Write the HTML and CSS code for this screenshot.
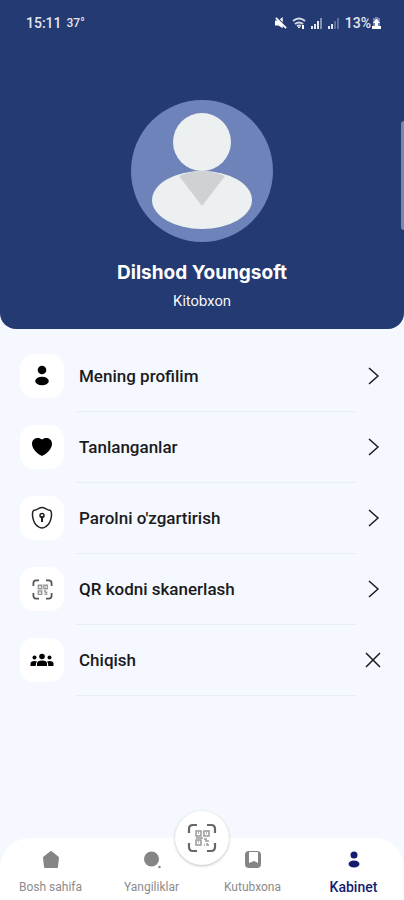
FILE: index.html
```html
<!DOCTYPE html>
<html lang="uz">
<head>
  <meta charset="UTF-8">
  <meta name="viewport" content="width=device-width, initial-scale=1.0">
  <title>Kabinet</title>
  <link rel="stylesheet" href="styles.css">
</head>
<body>
  <header class="profile">
    <div class="status-bar">
      <div class="status-left">
        <span>15:11</span>
        <span class="temp">37°</span>
      </div>
      <div class="status-right">
        <svg width="12" height="12" viewBox="0 0 14 14">
          <path d="M0 4h4l5-4v13L4 10H0z" fill="#fff"/>
          <path d="M2 0l12 13" stroke="#233a73" stroke-width="2"/>
          <path d="M1 1l12 12" stroke="#fff" stroke-width="2"/>
        </svg>
        <svg width="14" height="14" viewBox="0 0 14 14" fill="none" stroke="#d3d8e5" stroke-width="2">
          <path d="M1 5q6-5 12 0M3 8q4-3 8 0M5 10q2-1 4 0"/>
          <path d="M7 11v1M11 9v4" stroke="#fff"/>
        </svg>
        <svg width="12" height="12" viewBox="0 0 12 12">
          <path d="M0 9h2v3H0zM3 7h2v5H3zM6 4h2v8H6z" fill="#e3e6ee"/>
          <path d="M9 1h2v11H9z" fill="#8290b2"/>
        </svg>
        <svg width="12" height="12" viewBox="0 0 12 12">
          <path d="M0 9h2v3H0zM3 7h2v5H3z" fill="#e3e6ee"/>
          <path d="M6 4h2v8H6zM9 1h2v11H9z" fill="#5f70a0"/>
        </svg>
        <span class="battery">13%
          <svg width="9" height="12" viewBox="0 0 9 12">
            <path d="M3 0h3v1h2v11H1V1h2z" fill="#7282aa"/>
            <path d="M0 9h9v3H0zM4 2h1l3 4H6v3H3V6H1z" fill="#fff"/>
          </svg>
        </span>
      </div>
    </div>

    <svg class="avatar" viewBox="0 0 142 142" role="img" aria-label="Avatar">
      <circle cx="71" cy="71" r="71" fill="#6e83b9"/>
      <ellipse cx="71" cy="100" rx="50" ry="29" fill="#edf0f1"/>
      <path d="M48 76q23-10 46 0L71 106z" fill="#d0d1d2"/>
      <circle cx="71" cy="42" r="29" fill="#edf0f1"/>
    </svg>
    <h1>Dilshod Youngsoft</h1>
    <p class="role">Kitobxon</p>
    <div class="edge-handle"></div>
  </header>

  <main>
    <ul class="menu">
      <li>
        <a href="#profil">
          <span class="menu-icon">
            <svg width="24" height="24" viewBox="0 0 24 24">
              <circle cx="12" cy="6" r="4.300"/>
              <ellipse cx="12" cy="17" rx="6.800" ry="4.300"/>
            </svg>
          </span>
          <span class="menu-label">Mening profilim</span>
          <svg class="arrow" width="18" height="18" viewBox="0 0 18 18"><path d="M5 1l9 8-9 8"/></svg>
        </a>
      </li>
      <li>
        <a href="#tanlanganlar">
          <span class="menu-icon">
            <svg width="24" height="24" viewBox="0 0 24 24">
              <path d="M12 21C9 19.500 2 15 2 8.700 2 3 8.500 1.300 12 4.500c3.500-3.200 10-1.500 10 4.200 0 6.300-7 10.800-10 12.300z"/>
            </svg>
          </span>
          <span class="menu-label">Tanlanganlar</span>
          <svg class="arrow" width="18" height="18" viewBox="0 0 18 18"><path d="M5 1l9 8-9 8"/></svg>
        </a>
      </li>
      <li>
        <a href="#parol">
          <span class="menu-icon">
            <svg width="24" height="24" viewBox="0 0 24 24" fill="none" stroke="#222" stroke-width="1.500">
              <path d="M12 1.500C9 1.500 8 4 3.500 4.500 1.500 7 2.500 17 8 20.500c2.500 2 5.500 2 8 0 5.500-3.500 6.500-13.500 4.500-16C16 4 15 1.500 12 1.500z"/>
              <circle cx="12" cy="9.500" r="2"/>
              <path d="M12 10v6" stroke-width="2"/>
            </svg>
          </span>
          <span class="menu-label">Parolni o'zgartirish</span>
          <svg class="arrow" width="18" height="18" viewBox="0 0 18 18"><path d="M5 1l9 8-9 8"/></svg>
        </a>
      </li>
      <li>
        <a href="#qr">
          <span class="menu-icon">
            <svg width="21" height="21" viewBox="0 0 30 30" fill="none" stroke="#555">
              <path d="M2 10V6q0-4 4-4h4M20 2h4q4 0 4 4v4M28 20v4q0 4-4 4h-4M10 28H6q-4 0-4-4v-4" stroke-width="2.500"/>
              <path d="M9 9h5v5H9zM17 9h5v5h-5zM9 17h5v5H9zM17 17h2v2h3M22 22h-2v-2M17 22h1M11 11h1M19 11h1M11 19h1" stroke="#999" stroke-width="2"/>
            </svg>
          </span>
          <span class="menu-label">QR kodni skanerlash</span>
          <svg class="arrow" width="18" height="18" viewBox="0 0 18 18"><path d="M5 1l9 8-9 8"/></svg>
        </a>
      </li>
      <li>
        <a href="#chiqish">
          <span class="menu-icon">
            <svg width="24" height="24" viewBox="0 0 24 24">
              <circle cx="12" cy="8.500" r="2.800"/>
              <circle cx="4.500" cy="9.500" r="2"/>
              <circle cx="19.500" cy="9.500" r="2"/>
              <path d="M7 18v-2.500q0-3 5-3t5 3V18zM0.500 18v-2.500Q0.500 13 4.500 13q1.500 0 2.500.500-1.300 1-1.300 4.500zM23.500 18v-2.500Q23.500 13 19.500 13q-1.500 0-2.500.500 1.300 1 1.300 4.500z"/>
            </svg>
          </span>
          <span class="menu-label">Chiqish</span>
          <svg class="arrow" width="18" height="18" viewBox="0 0 18 18"><path d="M2 2l14 14M16 2L2 16"/></svg>
        </a>
      </li>
    </ul>
  </main>

  <nav class="bottom-nav">
    <a href="#bosh">
      <svg width="20" height="20" viewBox="0 0 20 20" fill="#858585">
        <path d="M10 2l7 5.500L16 17H4L3 7.500z" stroke="#858585" stroke-width="2" stroke-linejoin="round"/>
      </svg>
      Bosh sahifa
    </a>
    <a href="#yangiliklar">
      <svg width="20" height="20" viewBox="0 0 20 20" fill="#858585">
        <circle cx="9.500" cy="9" r="7.500"/>
        <circle cx="17.500" cy="17" r="1.200"/>
      </svg>
      Yangiliklar
    </a>
    <a href="#kutubxona">
      <svg width="20" height="20" viewBox="0 0 20 20">
        <rect x="2" y="1" width="16" height="17" rx="4" fill="#858585"/>
        <path d="M6 2h9v11l-4-2-5 2z" fill="#fff"/>
      </svg>
      Kutubxona
    </a>
    <a href="#kabinet" class="active">
      <svg width="20" height="20" viewBox="0 0 20 20" fill="#141c72">
        <circle cx="10" cy="5" r="3.500"/>
        <ellipse cx="10" cy="14" rx="5.500" ry="3.500"/>
      </svg>
      Kabinet
    </a>
    <button type="button" class="scan-btn" aria-label="QR skaner">
      <svg width="30" height="30" viewBox="0 0 30 30" fill="none" stroke="#666">
        <path d="M2 10V6q0-4 4-4h4M20 2h4q4 0 4 4v4M28 20v4q0 4-4 4h-4M10 28H6q-4 0-4-4v-4" stroke-width="2.200"/>
        <path d="M9 8h5v5H9zM17 8h5v5h-5zM9 17h5v5H9zM17 16h2v2h3M22 22h-2v-2M17 22h1M11 10h1M19 10h1M11 19h1M9 15h7" stroke="#999" stroke-width="1.500"/>
      </svg>
    </button>
  </nav>
</body>
</html>
```
FILE: styles.css
```css
* {
  box-sizing: border-box;
}

body {
  margin: 0;
  min-height: 100vh;
  display: flex;
  flex-direction: column;
  font-family: Roboto, Arial, sans-serif;
  background-color: #f5f8ff;
  color: #1b1b1d;
}

a {
  color: inherit;
  text-decoration: none;
}

.profile {
  position: relative;
  display: flex;
  flex-direction: column;
  align-items: center;
  padding-bottom: 18px;
  background-color: #233a73;
  border-radius: 0 0 16px 16px;
  color: #fff;
}

.status-bar {
  align-self: stretch;
  display: flex;
  justify-content: space-between;
  align-items: center;
  height: 46px;
  padding: 0 23px 0 26px;
  font-size: 14px;
  font-weight: 500;
  color: #e3e6ee;
}

.status-left,
.status-right,
.battery {
  display: flex;
  align-items: center;
}

.status-left {
  gap: 5px;
}

.temp {
  font-size: 12px;
}

.status-right {
  gap: 5px;
}

.battery {
  gap: 1px;
}

.avatar {
  width: 142px;
  height: 142px;
  margin-top: 54px;
}

.profile h1 {
  margin: 18px 0 0;
  font-family: Inter, Arial, sans-serif;
  font-size: 19px;
  line-height: 26px;
  font-weight: 700;
}

.role {
  margin: 5px 0 0;
  font-family: Inter, Arial, sans-serif;
  font-size: 14px;
  line-height: 20px;
  font-weight: 400;
}

.edge-handle {
  position: absolute;
  top: 121px;
  right: 0;
  width: 3px;
  height: 109px;
  background-color: #7a87a6;
  border-radius: 3px 0 0 3px;
}

main {
  flex: 1;
}

.menu {
  list-style: none;
  margin: 0;
  padding: 12px 20px;
}

.menu a {
  display: flex;
  align-items: center;
  height: 70px;
}

/* divider starts under the label and stops before the arrow */
.menu li::after {
  content: "";
  display: block;
  height: 1px;
  margin: 0 28px 0 56px;
  background-color: #e9edf7;
}

.menu-icon {
  display: flex;
  align-items: center;
  justify-content: center;
  width: 44px;
  height: 44px;
  margin-right: 15px;
  background-color: #fff;
  border-radius: 14px;
}

.menu-label {
  flex: 1;
  font-size: 17px;
  font-weight: 500;
}

.arrow {
  margin-right: 2px;
  fill: none;
  stroke: #1b1b1d;
  stroke-width: 1.5;
}

.bottom-nav {
  position: relative;
  display: flex;
  height: 62px;
  background-color: #fff;
  border-radius: 30px 30px 0 0;
}

.bottom-nav a {
  flex: 1;
  display: flex;
  flex-direction: column;
  align-items: center;
  gap: 9px;
  padding-top: 12px;
  font-size: 12px;
  line-height: 16px;
  color: #8b8b8b;
}

.bottom-nav a.active {
  color: #141c72;
  font-size: 14px;
  font-weight: 500;
}

.scan-btn {
  position: absolute;
  top: -27px;
  left: 50%;
  margin-left: -27px;
  display: flex;
  align-items: center;
  justify-content: center;
  width: 54px;
  height: 54px;
  padding: 0;
  background-color: #fff;
  border: none;
  border-radius: 50%;
  box-shadow: 0 1px 3px rgba(0, 0, 0, 0.25);
  cursor: pointer;
}
```
